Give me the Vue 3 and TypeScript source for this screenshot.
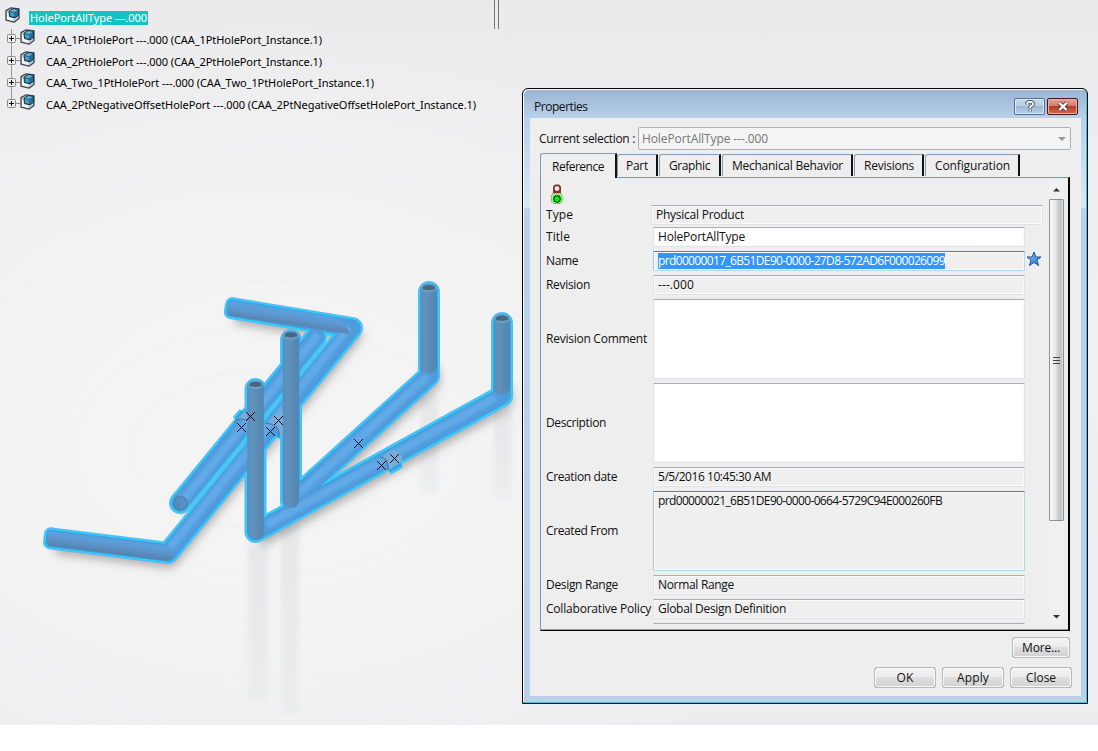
<script setup lang="ts">
import type { Directive } from 'vue'

interface TreeItem { label: string; width: number }
interface Tab { label: string; width: number; box: number; active?: boolean }
interface Field {
  label: string
  labelWidth: number
  value?: string
  valueWidth?: number
  kind: 'readonly' | 'edit' | 'focus' | 'accent'
  tall?: boolean
  star?: boolean
  wide?: boolean
}

/* Spreads the characters of a label so that it fills the given width. */
const vFit: Directive<HTMLElement, number | undefined> = {
  mounted(el, { value }) {
    const count = (el.textContent ?? '').length
    if (!value || count < 2) return
    const natural = el.getBoundingClientRect().width
    el.style.letterSpacing = `${(value - natural) / count}px`
  },
}

const tree: TreeItem[] = [
  { label: 'CAA_1PtHolePort ---.000 (CAA_1PtHolePort_Instance.1)', width: 276 },
  { label: 'CAA_2PtHolePort ---.000 (CAA_2PtHolePort_Instance.1)', width: 276 },
  { label: 'CAA_Two_1PtHolePort ---.000 (CAA_Two_1PtHolePort_Instance.1)', width: 328 },
  { label: 'CAA_2PtNegativeOffsetHolePort ---.000 (CAA_2PtNegativeOffsetHolePort_Instance.1)', width: 430 },
]

const tabs: Tab[] = [
  { label: 'Reference', width: 52, box: 77, active: true },
  { label: 'Part', width: 22, box: 41 },
  { label: 'Graphic', width: 41, box: 62 },
  { label: 'Mechanical Behavior', width: 111, box: 131 },
  { label: 'Revisions', width: 50, box: 70 },
  { label: 'Configuration', width: 75, box: 95 },
]

const fields: Field[] = [
  { label: 'Type', labelWidth: 27, value: 'Physical Product', valueWidth: 88, kind: 'readonly', wide: true },
  { label: 'Title', labelWidth: 24, value: 'HolePortAllType', valueWidth: 87, kind: 'edit' },
  { label: 'Name', labelWidth: 32, value: 'prd00000017_6B51DE90-0000-27D8-572AD6F000026099', valueWidth: 287, kind: 'focus', star: true },
  { label: 'Revision', labelWidth: 44, value: '---.000', valueWidth: 36, kind: 'readonly' },
  { label: 'Revision Comment', labelWidth: 101, kind: 'edit', tall: true },
  { label: 'Description', labelWidth: 60, kind: 'edit', tall: true },
  { label: 'Creation date', labelWidth: 71, value: '5/5/2016 10:45:30 AM', valueWidth: 113, kind: 'readonly' },
  { label: 'Created From', labelWidth: 72, value: 'prd00000021_6B51DE90-0000-0664-5729C94E000260FB', valueWidth: 284, kind: 'accent', tall: true },
  { label: 'Design Range', labelWidth: 72, value: 'Normal Range', valueWidth: 76, kind: 'readonly' },
  { label: 'Collaborative Policy', labelWidth: 105, value: 'Global Design Definition', valueWidth: 128, kind: 'readonly' },
]

const diagonals = [
  'M234 308.5 L352 328 L168 553 L54 538.7',
  'M316 337 L180 503',
  'M291 502 L430 375 L428.5 360',
  'M257 532 L502 396 L502 380',
]
const silhouettes = [
  'M316 337 L180 503',
  'M291 340 V501 L429 376 V292',
  'M255.5 389 V532 L502 396 V323',
]
const flatPipe = 'M231.5 308.2 L352 328 L168 553 L50.5 538.3'
const flatEnds = 'M232.2 304.2 L230.8 312 M51 534.3 L50 542.3'
const collars = 'M242 425 L249 417 M271 432 L279 422 M385 464 L397 457'
const outlines = [
  { color: '#55b9f5', width: 22 },
  { color: '#1fe0fb', width: 19.2 },
  { color: '#3c9fe3', width: 17.4 },
]
const marks = [
  [250.5, 416.5], [241.5, 427.5], [278.5, 420.5], [270.5, 431.5],
  [358.5, 443.5], [394.5, 458.5], [381.5, 465.5],
]
const tops = [[428.8, 288], [502, 318.7], [291, 335.3], [255.5, 384.8]]
</script>

<template>
  <main class="screen">
    <svg class="scene" width="1098" height="725" viewBox="0 0 1098 725">
      <defs>
        <filter id="soft" x="-20%" y="-20%" width="140%" height="140%"><feGaussianBlur stdDeviation="5" /></filter>
        <filter id="tiny" x="-10%" y="-10%" width="120%" height="120%"><feGaussianBlur stdDeviation="2" /></filter>
        <filter id="glow" x="-10%" y="-10%" width="120%" height="120%"><feGaussianBlur stdDeviation="0.6" /></filter>
        <filter id="sheen" x="-10%" y="-10%" width="120%" height="120%"><feGaussianBlur stdDeviation="1.6" /></filter>
        <linearGradient id="tube" x1="0" x2="1" y1="0" y2="0">
          <stop offset="0" stop-color="#578fc1" /><stop offset="0.3" stop-color="#6092bb" />
          <stop offset="0.75" stop-color="#5788b2" /><stop offset="1" stop-color="#4f88ba" />
        </linearGradient>
        <linearGradient id="armTop" gradientUnits="userSpaceOnUse" x1="290" y1="310" x2="287.5" y2="326">
          <stop offset="0" stop-color="#57a2e4" /><stop offset="0.4" stop-color="#5e99d2" />
          <stop offset="1" stop-color="#5580aa" />
        </linearGradient>
        <linearGradient id="armLow" gradientUnits="userSpaceOnUse" x1="108" y1="537.5" x2="106" y2="553.5">
          <stop offset="0" stop-color="#57a2e4" /><stop offset="0.4" stop-color="#5e99d2" />
          <stop offset="1" stop-color="#5580aa" />
        </linearGradient>
        <linearGradient id="mirror" x1="0" x2="0" y1="0" y2="1">
          <stop offset="0" stop-color="#dfe2e5" stop-opacity="0.7" /><stop offset="1" stop-color="#e3e5e8" stop-opacity="0.4" />
        </linearGradient>
      </defs>

      <g fill="none" stroke="#ececee" stroke-opacity="0.35">
        <ellipse cx="270" cy="450" rx="140" ry="80" /><ellipse cx="270" cy="450" rx="195" ry="125" />
        <ellipse cx="270" cy="450" rx="255" ry="170" /><ellipse cx="270" cy="450" rx="350" ry="230" />
        <ellipse cx="270" cy="450" rx="440" ry="300" />
      </g>
      <g fill="url(#mirror)" filter="url(#tiny)">
        <rect x="248" y="545" width="20" height="155" /><rect x="281" y="522" width="18" height="192" />
        <rect x="420" y="395" width="18" height="97" /><rect x="494" y="412" width="18" height="86" />
      </g>
      <g fill="none" stroke="#77736f" stroke-opacity="0.55" stroke-width="16" stroke-linejoin="round" filter="url(#soft)">
        <path v-for="d in diagonals" :key="d" :d="d" transform="translate(2 7)" />
      </g>

      <g fill="none" stroke-linejoin="round" stroke-linecap="round">
        <g v-for="o in outlines" :key="o.color" :stroke="o.color" :stroke-width="o.width">
          <path :d="flatPipe" stroke-linecap="butt" />
          <path :d="flatEnds" :stroke-width="o.width - 8" />
          <path :d="collars" :stroke-width="o.width + 2.5" stroke-linecap="butt" />
          <path v-for="d in silhouettes" :key="d" :d="d" />
        </g>
        <g stroke-width="16" stroke="#509bdd">
          <path v-for="d in diagonals" :key="d" :d="d" stroke-linecap="butt" />
          <path d="M316 337 L180 503" />
        </g>
        <g stroke-width="8" stroke="#65ade9" stroke-opacity="0.85" filter="url(#sheen)">
          <path d="M347 330 L172 545" /><path d="M316 337 L183 500" />
          <path d="M299 493 L425 378" /><path d="M270 523 L493 399" />
        </g>
      </g>

      <g filter="url(#glow)">
        <path d="M229.5 301 L331 316.5 Q345 320 350 334 L229 315.5 Q227 308 229.5 301Z" fill="url(#armTop)" />
        <path d="M48.5 531 L160 545.5 Q170 549 176 555 Q171 561 164 560.5 L48 545.5 Q46 538 48.5 531Z" fill="url(#armLow)" />
      </g>

      <g fill="#76aedb" stroke="#47799b" stroke-width="1.1">
        <path d="M235 424 L242 413.5 L248 411 V421 Q241 416 235 424Z" stroke="none" />
        <path d="M268 423 L280 411 L284 411 V434 L279 436 Q280 426 268 423Z" stroke="none" />
        <path d="M382 457 L391 450 Q402 451 402.5 461 L389 470 Q389 459 382 457Z" stroke="none" />
        <path d="M234 423 Q239 417 247 420 M265 423 Q280 424 279 436 M380 457 Q389 458 388 470" fill="none" />
        <circle cx="180.5" cy="503" r="6.7" fill="#4f91c8" stroke="#517f9f" />
        <path d="M175 501 Q180 506 178 509" fill="none" stroke-width="0.8" />
      </g>

      <g fill="url(#tube)">
        <path d="M420.5 288 H437.2 V368 Q433 376 420.5 371Z" />
        <path d="M493.7 319 H510.3 V389 Q505 398 493.7 392Z" />
        <path d="M282.8 335.5 H299.3 V499 Q299 508 291 508 Q283 508 282.8 499Z" />
        <path d="M247.3 385 H263.9 V532 Q263 540 257 540 Q248 538 247.3 530Z" />
      </g>
      <g v-for="([x, y], i) in tops" :key="i">
        <ellipse :cx="x" :cy="y" rx="8.2" ry="4.6" fill="#639dc9" />
        <ellipse :cx="x" :cy="y" rx="6.2" ry="3.1" fill="#46677f" />
        <path :d="`M${x - 4.5} ${y + 2} q4.5 1.8 9 0`" stroke="#87bad6" stroke-width="0.8" fill="none" />
      </g>
      <g stroke="#050b13" stroke-width="1" fill="none">
        <path v-for="([x, y], i) in marks" :key="i" :d="`M${x - 4.5} ${y - 4.5} l9 9 m0 -9 l-9 9`" />
      </g>
      <path d="M494.5 0 V29 M498.5 0 V29" stroke="#777" fill="none" />
    </svg>

    <svg class="defs" width="0" height="0">
      <symbol id="part" viewBox="0 0 15 16">
        <path d="M1 3.6 L6 .8 L14 1.8 V11.4 L9 15.2 L1 13.2Z" fill="#c9ced2" stroke="#3f474d" stroke-width="1.3" stroke-linejoin="round" />
        <path d="M2 5.5 L8 7.5 V14 L2 12.2Z" fill="#f4f5f5" />
        <path d="M4 4.2 L8 1.5 L13.5 2.3 V8.4 L10 10.8 L4.5 9.6Z" fill="#256f96" stroke="#12354c" stroke-width="1" />
        <path d="M4.8 4.2 L8.2 2.2 L12.5 2.8 L9.7 4.8Z" fill="#75b8d5" />
        <path d="M5.2 5.4 L9 6.2 V9.6 L5.2 8.8Z" fill="#4b9dc4" />
      </symbol>
    </svg>

    <nav class="tree">
      <div class="root">
        <svg class="part-icon" width="15" height="16"><use href="#part" /></svg>
        <span class="root-label"><span v-fit="117">HolePortAllType ---.000</span></span>
      </div>
      <ul>
        <li v-for="item in tree" :key="item.label">
          <span class="expander"><svg width="9" height="9" viewBox="0 0 9 9"><rect x=".5" y=".5" width="8" height="8" rx="1" fill="#eee" stroke="#888" /><path d="M2 4.5h5M4.5 2v5" stroke="#111" /></svg></span>
          <i class="link"></i>
          <svg class="part-icon" width="15" height="16"><use href="#part" /></svg>
          <span class="node-label"><span v-fit="item.width">{{ item.label }}</span></span>
        </li>
      </ul>
    </nav>

    <section class="dialog">
      <header>
        <h1><span v-fit="53.5">Properties</span></h1>
        <button class="caption help"><svg width="12" height="13" viewBox="0 0 12 13" fill="none"><path d="M3.2 4.4V3L4.8 1.8h2.6L9 3.1v1.6L6.2 6.8v1.6M6.2 9.7v1.9" stroke="#46566a" stroke-width="3.6" /><path d="M3.2 4.4V3L4.8 1.8h2.6L9 3.1v1.6L6.2 6.8v1.4M6.2 9.9v1.5" stroke="#fff" stroke-width="1.7" /></svg></button>
        <button class="caption shut"><svg width="12" height="11" viewBox="0 0 12 11"><path d="M2.4 2 L9.6 9 M9.6 2 L2.4 9" stroke="#543c42" stroke-width="4.2" /><path d="M2.4 2 L9.6 9 M9.6 2 L2.4 9" stroke="#fff" stroke-width="2.4" /></svg></button>
      </header>

      <div class="client">
        <div class="selection">
          <label><span v-fit="96">Current selection :</span></label>
          <div class="combo"><span v-fit="126">HolePortAllType ---.000</span><i class="down"></i></div>
        </div>

        <div class="tabs">
          <div v-for="tab in tabs" :key="tab.label" class="tab" :class="{ active: tab.active }" :style="{ width: tab.box + 'px' }">
            <span v-fit="tab.width">{{ tab.label }}</span>
          </div>
        </div>

        <div class="panel">
          <div class="form">
            <svg class="light" width="14" height="20" viewBox="0 0 14 20">
              <path d="M3 9.5V2.5L5 .5h4l2 2v7" fill="#7b3a34" />
              <circle cx="7" cy="4.5" r="3" fill="#ffe8e2" stroke="#6b1d1d" />
              <path d="M3 9h8l2.5 3v5L11 20H3L.5 17v-5Z" fill="#a6eb9a" />
              <path d="M2 9.5h10M1 11.5h12M1 13.5h12M1 15.5h12M1 17.5h12M3 19.5h8" stroke="#3ec832" stroke-dasharray="1 1" />
              <circle cx="7" cy="15" r="3.2" fill="#16e51b" stroke="#083c08" stroke-width="1.1" />
            </svg>
            <div v-for="field in fields" :key="field.label" class="row" :class="{ tall: field.tall, wide: field.wide }">
              <label><span v-fit="field.labelWidth">{{ field.label }}</span></label>
              <div class="field" :class="field.kind">
                <span v-if="field.value" v-fit="field.valueWidth" class="value">{{ field.value }}</span>
              </div>
              <svg v-if="field.star" class="star" width="16" height="16" viewBox="0 0 16 16">
                <defs><linearGradient id="starFill" x2="1" y2="1"><stop stop-color="#8dceff" /><stop offset="1" stop-color="#2167c2" /></linearGradient></defs>
                <path d="M8 1 L9.9 6 H15 L11 9.2 L12.6 14.6 L8 11.4 L3.4 14.6 L5 9.2 L1 6 H6.1Z" fill="url(#starFill)" stroke="#215697" />
              </svg>
            </div>
            <div class="row cut"><label></label><div class="field readonly"></div></div>
          </div>
          <div class="scrollbar">
            <svg class="arrow" width="15" height="17" viewBox="0 0 15 17"><path d="M4 9.5 L7.5 6 L11 9.5Z" fill="#333" /></svg>
            <div class="thumb"><i></i><i></i><i></i></div>
            <svg class="arrow" width="15" height="17" viewBox="0 0 15 17"><path d="M4 8 H11 L7.5 11.5Z" fill="#333" /></svg>
          </div>
        </div>

        <div class="more"><button class="push"><span v-fit="38">More...</span></button></div>
        <footer>
          <button class="push"><span v-fit="17">OK</span></button>
          <button class="push"><span v-fit="32">Apply</span></button>
          <button class="push"><span v-fit="30">Close</span></button>
        </footer>
      </div>
    </section>
  </main>
</template>

<style>
body { margin: 0; background: #fff; }
</style>

<style scoped>
* { box-sizing: border-box; }
.screen {
  position: relative;
  width: 1098px;
  height: 725px;
  overflow: hidden;
  background: radial-gradient(ellipse 560px 420px at 270px 440px, #f5f5f6 0, #f2f2f3 55%, transparent 100%),
    linear-gradient(#ebebed, #f0f0f1 45%, #ededef);
  font: 12px/16px "Open Sans", "Noto Sans", sans-serif;
  color: #101010;
}
span { white-space: pre; }
.scene { position: absolute; inset: 0; }
.defs { position: absolute; }

.tree { position: absolute; left: 0; top: 7px; font: 11px/14px "Noto Sans", sans-serif; color: #000; }
.root { display: flex; height: 22px; padding-left: 5px; }
.root-label { height: 14px; margin: 4px 0 0 9px; padding: 0 1px; background: #14c4c2; color: #fff; line-height: 14px; }
.root-label > span, .node-label > span { display: inline-block; }
.tree ul {
  margin: 0;
  padding: 0 0 0 7px;
  list-style: none;
  background: linear-gradient(#999, #999) 11px 0 / 1px 76px no-repeat;
}
.tree li { display: flex; align-items: center; height: 21.7px; }
.expander { display: flex; margin-top: -2px; }
.link { width: 4px; height: 1px; margin-top: -2px; background: #888; }
.part-icon { flex: none; margin-top: -5px; }
.root .part-icon { margin-top: 0; }
.node-label { margin-left: 11px; }

.dialog {
  position: absolute;
  left: 522px;
  top: 88px;
  width: 566px;
  height: 616px;
  padding: 0 6px 6px;
  border: 1px solid #05080b;
  border-radius: 6px 6px 0 0;
  box-shadow: inset -1px -1px #48bfd0, inset 1px 1px #f5fbff;
  background: linear-gradient(#9ab4d2, #b9d1ea 30px, #dbe8f5 118px, #b9d1ea 120px);
}
header { display: flex; height: 29px; padding: 9px 3px 0 5px; }
h1 { flex: 1; margin: 1px 0 0; font: inherit; }
.caption {
  display: grid;
  place-items: center;
  width: 31px;
  height: 17px;
  padding: 0;
  border: 1px solid #56718f;
  border-radius: 2px;
  background: linear-gradient(#c7d9eb, #b7cde3 48%, #9db8d4 50%, #b7d0e9);
  box-shadow: inset 0 0 0 1px #dce9f5;
}
.shut {
  margin-left: 2px;
  border-color: #48171b;
  background: linear-gradient(#e4a397, #d47b6b 48%, #b93b28 50%, #d26a50);
  box-shadow: inset 0 0 0 1px #e7b2a7;
}
.client { height: 578px; margin: 0 0 0 1px; padding: 9px 9px 0 9px; background: #eee; }
.selection { display: flex; align-items: center; height: 22px; }
.selection label { width: 99px; padding-top: 1px; }
.combo {
  display: flex;
  align-items: center;
  justify-content: space-between;
  width: 433px;
  height: 23px;
  padding: 1px 4px 0 3px;
  border: 1px solid #adb2b8;
  border-radius: 2px;
  background: #f4f4f4;
  color: #777;
}
.down { border: 4px solid transparent; border-top-color: #999; border-bottom: 0; }
.tabs { display: flex; align-items: flex-end; height: 28px; margin: 0 0 0 1px; }
.tab {
  flex: none;
  height: 22px;
  padding: 3px 0 0 9px;
  border: 1px solid #839db7;
  border-right: 2px solid #111;
  border-bottom: 0;
  border-radius: 3px 0 0 0;
  margin-right: 1px;
  margin-bottom: 1px;
}
.tab.active { height: 25px; margin: 0 0 -1px; padding: 5px 0 0 11px; background: #eee; position: relative; }
.tab:nth-child(2) { padding-left: 8px; }
.panel {
  display: flex;
  width: 530px;
  height: 454px;
  margin-left: 1px;
  padding: 4px 4px 5px 5px;
  border: 1px solid #7894b0;
  border-right: 2px solid #050505;
  border-bottom: 1px solid #050505;
  box-shadow: inset 0 -1px #999;
}
.form { display: flex; flex-direction: column; gap: 4px; width: 503px; height: 442px; overflow: hidden; }
.light { flex: none; margin: 2px 0 -3px 4px; }
.row { display: grid; grid-template-columns: 107px 372px 1fr; align-items: center; flex: none; height: 20px; }
.row.wide { grid-template-columns: 105px 392px; height: 20px; margin-bottom: -2px; }
.row.tall { height: 80px; }
.field {
  height: 100%;
  padding: 1px 0 0 4px;
  border: 1px solid #e2e3e5;
  border-top-color: #abadb3;
  border-radius: 1px;
  box-shadow: inset 0 0 0 1px #fafafa;
  background: #efefef;
}
.value { display: inline-block; line-height: 16px; }
.edit { background: #fff; }
.focus, .accent { border-color: #4a7fae #b8d6ea #b8d6ea #a9c5dc; }
.focus .value { background: #3297fd; color: #fff; }
.star { margin: -5px 0 0 1px; }
.scrollbar { display: flex; flex-direction: column; width: 15px; height: 442px; margin: 0; background: #f1f1f1; }
.arrow { flex: none; }
.thumb {
  display: flex;
  flex: none;
  flex-direction: column;
  align-items: center;
  justify-content: center;
  gap: 2px;
  height: 322px;
  margin-bottom: 86px;
  padding-right: 1px;
  border: 1px solid #929292;
  border-radius: 1px;
  background: linear-gradient(90deg, #f7f7f7, #e6e6e7 48%, #cecfd2 55%, #c3c4c8 85%, #dedede);
}
.thumb i { width: 7px; height: 1px; background: #444; }
.more { display: flex; justify-content: flex-end; width: 531px; margin-top: 6px; }
footer { display: flex; justify-content: flex-end; gap: 6px; width: 533px; margin-top: 9px; }
.push {
  width: 62px;
  height: 21px;
  padding: 0;
  border: 1px solid #aaa;
  border-radius: 3px;
  outline: 1px solid #b8b8b8;
  outline-offset: -1px;
  background: linear-gradient(#f3f3f3, #ebebeb 48%, #dedede 50%, #d2d2d2);
  box-shadow: inset 0 0 0 1px #fafafa;
  color: #111;
  font: 12px/18px "Open Sans", "Noto Sans", sans-serif;
}
.more .push { width: 58px; }
.push span { display: inline-block; }
</style>
